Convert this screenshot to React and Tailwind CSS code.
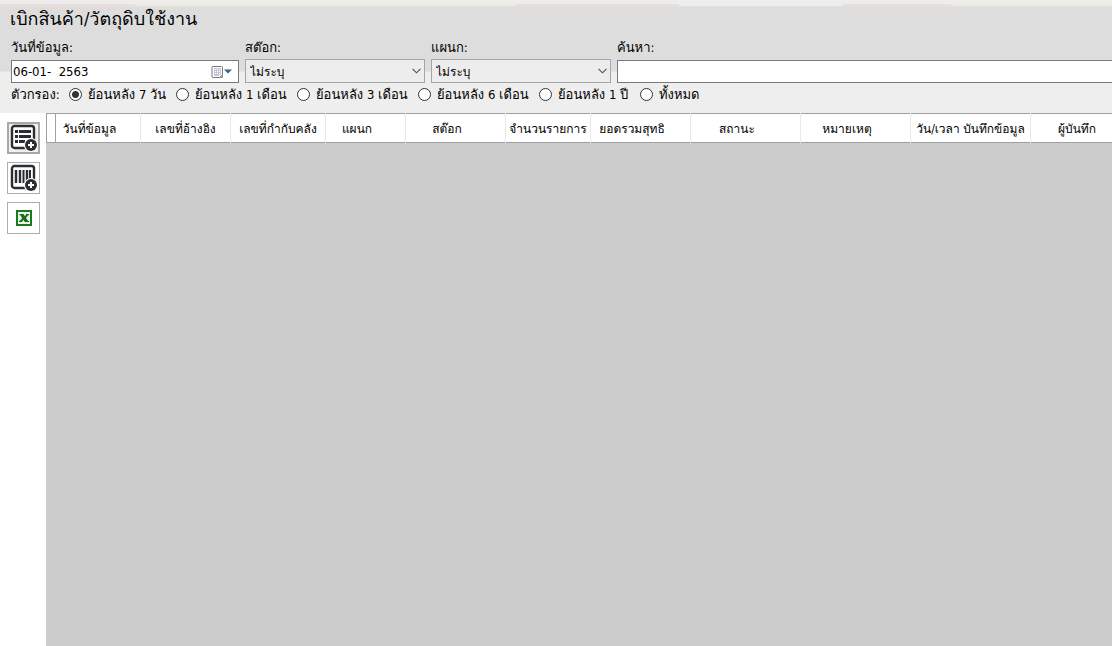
import React, { useState } from "react";

const FILTERS = [
  { label: "ย้อนหลัง 7 วัน", width: "w-[107px]" },
  { label: "ย้อนหลัง 1 เดือน", width: "w-[121px]" },
  { label: "ย้อนหลัง 3 เดือน", width: "w-[121px]" },
  { label: "ย้อนหลัง 6 เดือน", width: "w-[121px]" },
  { label: "ย้อนหลัง 1 ปี", width: "w-[101px]" },
  { label: "ทั้งหมด", width: "w-[80px]" },
];

const COLUMNS = [
  { label: "วันที่ข้อมูล", width: "w-[85px] pr-[17px]" },
  { label: "เลขที่อ้างอิง", width: "w-[90px]" },
  { label: "เลขที่กำกับคลัง", width: "w-[95px]" },
  { label: "แผนก", width: "w-[80px] pr-[17px]" },
  { label: "สต๊อก", width: "w-[100px] pr-[17px]" },
  { label: "จำนวนรายการ", width: "w-[85px]" },
  { label: "ยอดรวมสุทธิ", width: "w-[100px] pr-[17px]" },
  { label: "สถานะ", width: "w-[110px] pr-[17px]" },
  { label: "หมายเหตุ", width: "w-[110px] pr-[17px]" },
  { label: "วัน/เวลา บันทึกข้อมูล", width: "w-[120px]" },
  { label: "ผู้บันทึก", width: "w-[110px] pr-[17px]" },
];

function Stripes() {
  return (
    <div className="flex h-[3px] w-full border-b border-[#e8dfd6]">
      <div className="w-[135px] bg-[#ebdcdc]" />
      <div className="w-[381px] bg-[#eeebdc]" />
      <div className="w-[163px] bg-[#ebdcdc]" />
      <div className="w-[164px] bg-[#ededed]" />
      <div className="w-[108px] bg-[#ebdcdc]" />
      <div className="flex-1 bg-[#eeebdc]" />
    </div>
  );
}

function PlusBadge() {
  return (
    <>
      <circle cx="21" cy="21" r="7" fill="#fff" />
      <circle cx="21" cy="21" r="6" fill="#2b2e30" />
      <path d="M21 18v6M18 21h6" stroke="#fff" strokeWidth="2" />
    </>
  );
}

function ListAddIcon() {
  return (
    <svg width="28" height="28" viewBox="0 0 28 28" fill="none" aria-hidden="true">
      <rect x="2" y="2" width="22" height="22" rx="2.5" fill="#fff" stroke="#2b2e30" strokeWidth="2.400" />
      <path d="M5 7.500h3M5 12.500h3M5 17.500h3M9 7.500h12M9 12.500h12M9 17.500h6" stroke="#2b2e30" strokeWidth="3" />
      <PlusBadge />
    </svg>
  );
}

function BarcodeAddIcon() {
  return (
    <svg width="28" height="28" viewBox="0 0 28 28" fill="none" aria-hidden="true">
      <rect x="2" y="2" width="22" height="22" rx="2.5" fill="#fff" stroke="#2b2e30" strokeWidth="2.400" />
      <path d="M6 6v13M10 6v13M17 6v13" stroke="#2b2e30" strokeWidth="2.400" />
      <path d="M13.500 6v13M20 6v13" stroke="#2b2e30" strokeWidth="2" />
      <PlusBadge />
    </svg>
  );
}

function ExcelIcon() {
  return (
    <svg width="16" height="16" viewBox="0 0 16 16" fill="none" aria-hidden="true">
      <rect x="1" y="1" width="14" height="14" fill="#edf6ed" stroke="#1a7a1e" strokeWidth="2" />
      <path d="M3.500 4h4L9 6.300 10.300 4h2.700v1.200h-1L10 8l2.200 3h.8v1H8.800L7.300 9.700 6 12H3v-1.200h1L6.200 8 4 5h-.5z" fill="#146f18" />
    </svg>
  );
}

function CalendarIcon() {
  return (
    <svg width="22" height="14" viewBox="0 0 22 14" fill="none" aria-hidden="true">
      <path d="M2 1.500h8.500q1 0 1 1v7l-3 3H2q-1 0-1-1v-9q0-1 1-1z" fill="#fff" stroke="#777580" />
      <path d="M11.500 9.500v3h-3z" fill="#c9a39c" stroke="#8d8489" strokeWidth="0.800" />
      <path d="M3 3h7v7H8v1H3z" fill="#c3c8d6" />
      <path d="M4 4h1v1H4zM6 4h1v1H6zM8 4h1v1H8zM4 6h1v1H4zM6 6h1v1H6zM8 6h1v1H8zM4 8h1v1H4zM6 8h1v1H6zM8 8h1v1H8z" fill="#fff" />
      <path d="M13 4.500h8l-4 4z" fill="#3d617f" />
    </svg>
  );
}

function SelectField({ id, label }) {
  return (
    <div className="w-[180px] shrink-0">
      <label htmlFor={id} className="block h-[19px] leading-[16px]">{label}</label>
      <div className="grid">
        <select
          id={id}
          className="col-start-1 row-start-1 h-6 w-full appearance-none border border-[#a5a5a5] bg-[#ededed] pt-px pr-5 pl-1 text-[12px] outline-none"
        >
          <option>ไม่ระบุ</option>
        </select>
        <svg
          className="pointer-events-none col-start-1 row-start-1 mr-1 self-center justify-self-end"
          width="9"
          height="6"
          viewBox="0 0 9 6"
          fill="none"
          aria-hidden="true"
        >
          <path d="M.5.8l4 4 4-4" stroke="#505050" strokeWidth="1.100" />
        </svg>
      </div>
    </div>
  );
}

export default function App() {
  const [filter, setFilter] = useState(0);

  return (
    <div className="flex min-h-screen flex-col overflow-hidden bg-white font-['DejaVu_Sans_Condensed','Loma',sans-serif] text-[13px] leading-[16px] text-black">
      <header className="h-[113px] shrink-0 bg-[linear-gradient(#ededed_0_4px,#dddddd_4px_71px,#ebe3dc_71px_72px,#eeeeee_72px)] pt-1">
        <Stripes />
        <h1 className="h-[33px] pl-[10px] text-[18px] leading-6">เบิกสินค้า/วัตถุดิบใช้งาน</h1>
        <div className="flex gap-[6px] pl-[11px]">
          <div className="w-[228px] shrink-0">
            <label htmlFor="date" className="block h-5 leading-[16px]">วันที่ข้อมูล:</label>
            <div className="flex h-[23px] items-center border border-[#7a7a7a] bg-white pr-[5px]">
              <input id="date" type="text" defaultValue="06-01-  2563" className="min-w-0 flex-1 pl-px outline-none" />
              <button type="button" aria-label="ปฏิทิน" className="flex">
                <CalendarIcon />
              </button>
            </div>
          </div>
          <SelectField id="stock" label="สต๊อก:" />
          <SelectField id="department" label="แผนก:" />
          <div className="min-w-0 flex-1">
            <label htmlFor="search" className="block h-5 leading-[16px]">ค้นหา:</label>
            <input id="search" type="text" className="block h-[23px] w-full border border-r-0 border-[#7a7a7a] bg-white px-1 outline-none" />
          </div>
        </div>
        <fieldset className="flex h-[22px] items-center pl-[11px]">
          <legend className="float-left w-[58px] pt-px">ตัวกรอง:</legend>
          {FILTERS.map((item, i) => (
            <label key={item.label} className={"flex items-center gap-[6px] whitespace-nowrap " + item.width}>
              <input
                type="radio"
                name="filter"
                checked={filter === i}
                onChange={() => setFilter(i)}
                className="size-[13px] shrink-0 appearance-none rounded-full border border-[#333] bg-white checked:bg-[radial-gradient(circle,#333_0_3px,#fff_4px)]"
              />
              <span className="pt-px">{item.label}</span>
            </label>
          ))}
        </fieldset>
      </header>

      <div className="flex flex-1">
        <nav className="flex w-[46px] shrink-0 flex-col gap-2 pt-[9px] pl-[7px]">
          <button type="button" aria-label="เพิ่มรายการ" className="flex h-8 w-[33px] items-center justify-center border-2 border-[#a8a8a8] bg-[#f0f0f0]">
            <ListAddIcon />
          </button>
          <button type="button" aria-label="เพิ่มด้วยบาร์โค้ด" className="flex h-8 w-[33px] items-center justify-center border border-[#adadad] bg-white">
            <BarcodeAddIcon />
          </button>
          <button type="button" aria-label="Excel" className="flex h-8 w-[33px] items-center justify-center border border-[#adadad] bg-white">
            <ExcelIcon />
          </button>
        </nav>
        <main className="min-w-0 flex-1 overflow-hidden bg-[#cccccc]">
          <table className="w-[1094px] table-fixed border-collapse border border-[#a0a0a0] bg-white">
            <thead>
              <tr className="h-[29px]">
                <td className="w-[9px] border-r border-[#a0a0a0]" />
                {COLUMNS.map((column) => (
                  <th key={column.label} scope="col" className={"border-r border-r-[#e8e8e8] pt-[2px] text-[12px] font-normal whitespace-nowrap " + column.width}>
                    {column.label}
                  </th>
                ))}
              </tr>
            </thead>
          </table>
        </main>
      </div>
    </div>
  );
}
